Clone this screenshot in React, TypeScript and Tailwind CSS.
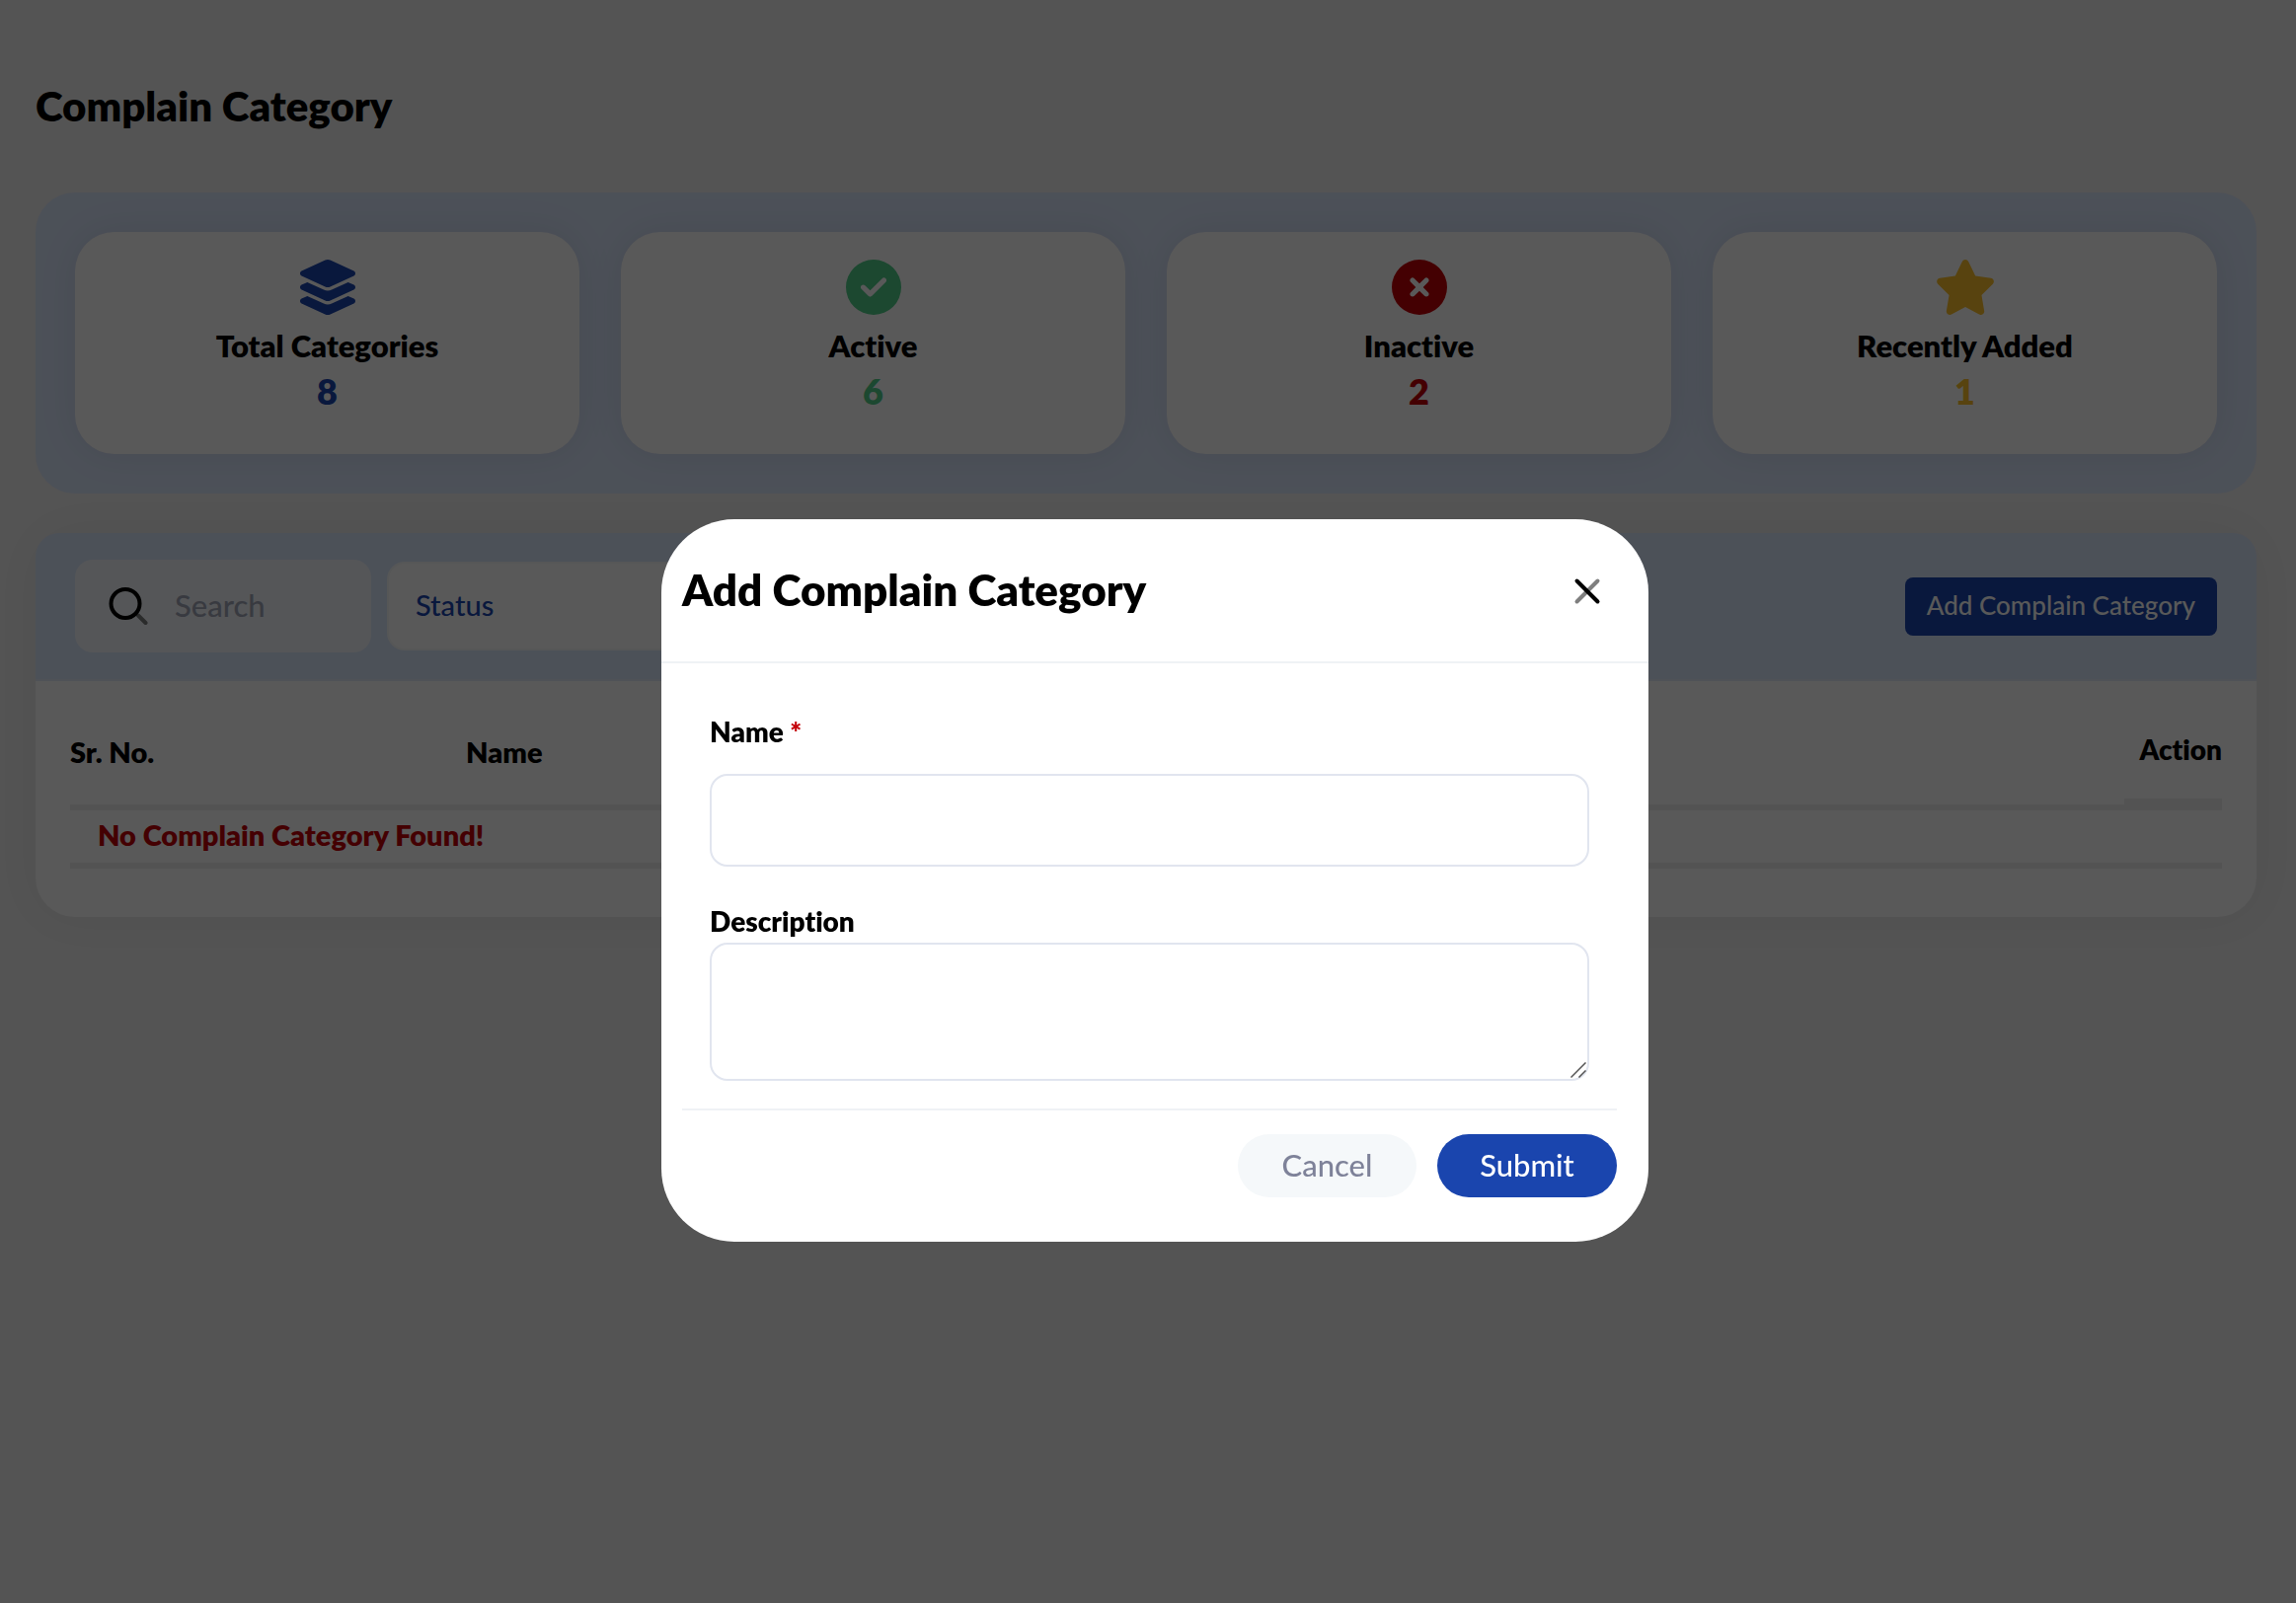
import { useState } from 'react';
import type { ReactNode } from 'react';
import { FaCircleCheck, FaCircleXmark, FaLayerGroup, FaStar } from 'react-icons/fa6';

const stats = [
  { label: 'Total Categories', value: 8, color: 'text-[#1a45ae]', icon: FaLayerGroup },
  { label: 'Active', value: 6, color: 'text-[#50cd89]', icon: FaCircleCheck },
  { label: 'Inactive', value: 2, color: 'text-[#c40008]', icon: FaCircleXmark },
  { label: 'Recently Added', value: 1, color: 'text-[#fbc02d]', icon: FaStar },
];

const SearchIcon = () => (
  <svg className="h-10 w-10 shrink-0" viewBox="0 0 40 40" fill="none" stroke="black" strokeLinecap="round">
    <path d="M30 29.5L37.5 37" strokeWidth="4" opacity="0.5" />
    <circle cx="17" cy="17.5" r="14.5" strokeWidth="4" />
  </svg>
);

const CloseIcon = () => (
  <svg className="h-7 w-7" viewBox="0 0 28 28" fill="none" stroke="black" strokeWidth="4" strokeLinecap="round">
    <path d="M24.5 3.5L3.5 24.5" opacity="0.5" />
    <path d="M3.5 3.5L24.5 24.5" />
  </svg>
);

const StatCards = () => (
  <section className="grid grid-cols-4 gap-[42px] rounded-[40px] bg-[#dbe7fd] p-10">
    {stats.map(({ label, value, color, icon: Icon }) => (
      <div
        key={label}
        className="flex flex-col items-center rounded-[40px] bg-white pt-7 pb-11 shadow-[0_0_40px_rgba(0,0,0,0.08)]"
      >
        <Icon className={`h-14 w-16 ${color}`} />
        <h3 className="mt-[11px] text-[31px] leading-10 font-extrabold">{label}</h3>
        <p className={`mt-1.5 text-[36px] leading-10 font-extrabold ${color}`}>{value}</p>
      </div>
    ))}
  </section>
);

const CategoryTable = ({ onAdd }: { onAdd: () => void }) => (
  <section className="mt-10 rounded-[40px] bg-white pb-[49px] shadow-[0_0_50px_rgba(0,0,0,0.04)]">
    <div className="flex items-center rounded-t-[24px] border-b-2 border-[#e1eaf8] bg-[#dbe7fd] px-10 py-[27px]">
      <label className="flex h-[94px] w-[300px] items-center gap-[27px] rounded-[18px] bg-[#f3f7fb] pl-[34px]">
        <SearchIcon />
        <input
          type="text"
          placeholder="Search"
          aria-label="Search"
          className="w-full min-w-0 bg-transparent pb-0.5 text-[31px] font-medium outline-none placeholder:text-[#a1a5b7]"
        />
      </label>
      <select
        aria-label="Status"
        defaultValue="status"
        className="ml-4 h-[90px] w-[400px] appearance-none rounded-[18px] border-2 border-[#f5f8fa] bg-white px-[27px] pb-0.5 text-[29px] font-medium text-[#1a45ae]"
      >
        <option value="status">Status</option>
        <option value="active">Active</option>
        <option value="inactive">Inactive</option>
      </select>
      <button
        type="button"
        onClick={onAdd}
        className="ml-auto h-[59px] rounded-lg bg-[#1a45ae] px-[22px] pb-0.5 text-[26px] font-medium text-white"
      >
        Add Complain Category
      </button>
    </div>

    <div className="px-[35px] pt-[18px]">
      <table className="w-full table-fixed border-separate border-spacing-0 text-left text-[29px] font-extrabold">
        <thead>
          <tr>
            <th className="h-[113px] w-[401px] border-b-6 border-[#eeeeee] font-extrabold">Sr. No.</th>
            <th className="border-b-6 border-[#eeeeee] font-extrabold">Name</th>
            <th className="w-[99px] border-b-6 border-[#eeeeee] p-0 text-[28px] font-extrabold">
              <div className="flex h-[107px] items-center justify-end border-b-6 border-[#eeeeee]">Action</div>
            </th>
          </tr>
        </thead>
        <tbody>
          <tr>
            <td colSpan={3} className="h-[59px] border-b-6 border-[#eeeeee] pb-1 pl-7 leading-10 text-[#c40008]">
              No Complain Category Found!
            </td>
          </tr>
        </tbody>
      </table>
    </div>
  </section>
);

const FieldLabel = ({ htmlFor, children }: { htmlFor: string; children: ReactNode }) => (
  <label htmlFor={htmlFor} className="block text-[28px] leading-10 font-extrabold">
    {children}
  </label>
);

const AddCategoryModal = ({ onClose }: { onClose: () => void }) => (
  <div className="fixed inset-0 flex items-start justify-center bg-black/65 pt-[526px] pl-3.5">
    <div role="dialog" aria-labelledby="modal-title" className="w-[1000px] rounded-[74px] bg-white pb-[45px]">
      <div className="flex h-[146px] items-center justify-between border-b-2 border-[#eff2f5] pr-12 pl-[21px]">
        <h2 id="modal-title" className="pb-0.5 text-[44px] font-extrabold">Add Complain Category</h2>
        <button type="button" aria-label="Close" onClick={onClose} className="pt-0.5">
          <CloseIcon />
        </button>
      </div>

      <form onSubmit={(e) => e.preventDefault()}>
        <div className="pt-[49px] pr-[60px] pl-[49px]">
          <FieldLabel htmlFor="name">
            Name <span className="text-[#c40008]">*</span>
          </FieldLabel>
          <input
            id="name"
            type="text"
            className="mt-[23px] h-[94px] w-full rounded-[18px] border-2 border-[#e1e5ef] px-6 text-[28px] outline-none"
          />
          <div className="mt-[35px]">
            <FieldLabel htmlFor="description">Description</FieldLabel>
          </div>
          <div className="relative mt-0.5">
            <textarea
              id="description"
              className="block h-[140px] w-full resize-none rounded-[18px] border-2 border-[#e1e5ef] px-6 py-4 text-[28px] outline-none"
            />
            <svg
              className="pointer-events-none absolute right-[3px] bottom-[3px] h-4 w-4"
              viewBox="0 0 16 16"
              stroke="#555555"
              strokeWidth="1.5"
            >
              <path d="M0.5 15.5L15.5 0.5M8.5 15.5L15.5 8.5" />
            </svg>
          </div>
        </div>

        <div className="mt-7 mr-8 ml-[21px] flex justify-end gap-[21px] border-t-2 border-[#eff2f5] pt-6">
          <button
            type="button"
            onClick={onClose}
            className="h-16 w-[181px] rounded-full bg-[#f5f8fa] pb-0.5 text-[31px] font-medium text-[#7e8299]"
          >
            Cancel
          </button>
          <button
            type="submit"
            className="h-16 w-[182px] rounded-full bg-[#1a45ae] pb-0.5 text-[31px] font-medium text-white"
          >
            Submit
          </button>
        </div>
      </form>
    </div>
  </div>
);

export default function App() {
  const [showModal, setShowModal] = useState(true);

  return (
    <div className="min-h-screen bg-[#efefef] pt-[75px] pr-10 pb-10 pl-9 font-['Lato',sans-serif] text-black [font-variant-ligatures:none]">
      <h1 className="mb-14 text-[42px] leading-16 font-extrabold">Complain Category</h1>
      <StatCards />
      <CategoryTable onAdd={() => setShowModal(true)} />
      {showModal && <AddCategoryModal onClose={() => setShowModal(false)} />}
    </div>
  );
}
